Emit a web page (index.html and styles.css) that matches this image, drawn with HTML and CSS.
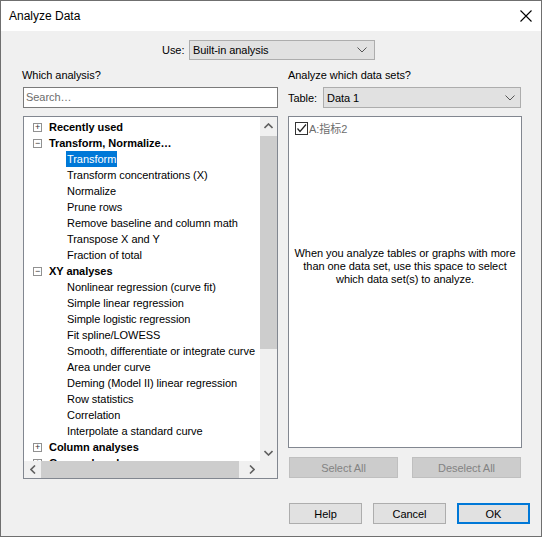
FILE: index.html
```html
<!DOCTYPE html>
<html>
<head>
<meta charset="utf-8">
<link rel="stylesheet" href="styles.css">
</head>
<body>
<div class="window">
  <div class="titlebar">
    <span class="title">Analyze Data</span>
    <svg class="close" width="12" height="12" viewBox="0 0 12 12"><path d="M0.5 0.5 L11.5 11.5 M11.5 0.5 L0.5 11.5" stroke="#000" stroke-width="1.1" fill="none"/></svg>
  </div>
  <div class="content">
    <div class="use-row">
      <span class="lbl">Use:</span>
      <div class="select use-select"><span>Built-in analysis</span><svg class="chev" width="10" height="6" viewBox="0 0 10 6"><path d="M0.5 0.5 L5 5 L9.5 0.5" stroke="#555" fill="none"/></svg></div>
    </div>
    <div class="columns">
      <div class="left">
        <div class="heading">Which analysis?</div>
        <div class="search">Search…</div>
        <div class="tree">
          <div class="tree-main">
            <div class="rows">
              <div class="row cat"><span class="exp">+</span>Recently used</div>
              <div class="row cat"><span class="exp">−</span>Transform, Normalize…</div>
              <div class="row item"><span class="sel">Transform</span></div>
              <div class="row item">Transform concentrations (X)</div>
              <div class="row item">Normalize</div>
              <div class="row item">Prune rows</div>
              <div class="row item">Remove baseline and column math</div>
              <div class="row item">Transpose X and Y</div>
              <div class="row item">Fraction of total</div>
              <div class="row cat"><span class="exp">−</span>XY analyses</div>
              <div class="row item">Nonlinear regression (curve fit)</div>
              <div class="row item">Simple linear regression</div>
              <div class="row item">Simple logistic regression</div>
              <div class="row item">Fit spline/LOWESS</div>
              <div class="row item">Smooth, differentiate or integrate curve</div>
              <div class="row item">Area under curve</div>
              <div class="row item">Deming (Model II) linear regression</div>
              <div class="row item">Row statistics</div>
              <div class="row item">Correlation</div>
              <div class="row item">Interpolate a standard curve</div>
              <div class="row cat"><span class="exp">+</span>Column analyses</div>
              <div class="row cat"><span class="exp">+</span>Grouped analyses</div>
            </div>
            <div class="vscroll">
              <div class="arrow"><svg width="9" height="6" viewBox="0 0 9 6"><path d="M0.5 5 L4.5 1 L8.5 5" stroke="#606060" stroke-width="1.6" fill="none"/></svg></div>
              <div class="vtrack"><div class="vthumb"></div></div>
              <div class="arrow"><svg width="9" height="6" viewBox="0 0 9 6"><path d="M0.5 1 L4.5 5 L8.5 1" stroke="#606060" stroke-width="1.6" fill="none"/></svg></div>
            </div>
          </div>
          <div class="hscroll">
            <div class="harrow"><svg width="6" height="9" viewBox="0 0 6 9"><path d="M5 0.5 L1 4.5 L5 8.5" stroke="#606060" stroke-width="1.6" fill="none"/></svg></div>
            <div class="htrack"><div class="hthumb"></div></div>
            <div class="harrow"><svg width="6" height="9" viewBox="0 0 6 9"><path d="M1 0.5 L5 4.5 L1 8.5" stroke="#606060" stroke-width="1.6" fill="none"/></svg></div>
            <div class="corner"></div>
          </div>
        </div>
      </div>
      <div class="right">
        <div class="heading">Analyze which data sets?</div>
        <div class="table-row">
          <span class="lbl">Table:</span>
          <div class="select table-select"><span>Data 1</span><svg class="chev" width="10" height="6" viewBox="0 0 10 6"><path d="M0.5 0.5 L5 5 L9.5 0.5" stroke="#555" fill="none"/></svg></div>
        </div>
        <div class="datasets">
          <div class="ds-item">
            <span class="cb"><svg width="11" height="11" viewBox="0 0 11 11"><path d="M1.5 5.5 L4 8.5 L10 1.5" stroke="#222" stroke-width="1.2" fill="none"/></svg></span>
            <span class="ds-text">A:指标2</span>
          </div>
          <div class="ds-note">When you analyze tables or graphs with more<br>than one data set, use this space to select<br>which data set(s) to analyze.</div>
        </div>
        <div class="sel-buttons">
          <div class="btn disabled">Select All</div>
          <div class="btn disabled">Deselect All</div>
        </div>
      </div>
    </div>
    <div class="footer">
      <div class="btn">Help</div>
      <div class="btn">Cancel</div>
      <div class="btn default">OK</div>
    </div>
  </div>
</div>
</body>
</html>
```
FILE: styles.css
```css
* { box-sizing: border-box; }
html, body { margin: 0; padding: 0; }
body {
  font-family: "Liberation Sans", Arial, "Noto Sans CJK SC", sans-serif;
  font-size: 11px;
  letter-spacing: -0.05px;
  color: #000;
  background: #f0f0f0;
}
.window {
  width: 542px;
  height: 537px;
  border: 1px solid #6f6f6f;
  display: flex;
  flex-direction: column;
  background: #f0f0f0;
}
.titlebar {
  height: 30px;
  background: #fff;
  display: flex;
  align-items: center;
  justify-content: space-between;
  padding: 0 9px 0 8px;
  flex: none;
}
.title { font-size: 12px; letter-spacing: 0; }
.content {
  flex: 1;
  display: flex;
  flex-direction: column;
  padding: 9px 0 0 21px;
}
.use-row {
  display: flex;
  align-items: center;
  height: 20px;
  margin-left: 140px;
}
.use-row .lbl { width: 27px; }
.select {
  background: #e1e1e1;
  border: 1px solid #adadad;
  display: flex;
  align-items: center;
  justify-content: space-between;
  padding: 0 7px 0 3px;
}
.use-select { width: 186px; height: 20px; }
.columns {
  display: flex;
  margin-top: 8px;
}
.left { width: 255px; margin-left: 1px; }
.right { width: 234px; margin-left: 10px; }
.heading { height: 16px; padding-top: 1px; }
.left .heading { margin-left: -1px; }
.search {
  margin-top: 3px;
  height: 21px;
  border: 1px solid #7a7a7a;
  background: #fff;
  color: #6d6d6d;
  padding: 3px 0 0 2px;
}
.tree {
  margin-top: 8px;
  height: 363px;
  border: 1px solid #828790;
  background: #fff;
  display: flex;
  flex-direction: column;
}
.tree-main {
  flex: 1;
  display: flex;
  overflow: hidden;
}
.rows {
  flex: 1;
  overflow: hidden;
  padding-top: 2px;
  white-space: nowrap;
}
.row {
  height: 16px;
  line-height: 16px;
  display: flex;
  align-items: center;
}
.row.cat { font-weight: bold; padding-left: 9px; }
.row.item { padding-left: 43px; }
.exp {
  width: 9px;
  height: 9px;
  border: 1px solid #919191;
  font-size: 9px;
  line-height: 7px;
  text-align: center;
  font-weight: normal;
  color: #333;
  margin-right: 7px;
  flex: none;
}
.sel {
  background: #0078d7;
  color: #fff;
  padding: 0 1px;
  margin-left: -1px;
  line-height: 16px;
}
.vscroll {
  width: 17px;
  background: #f0f0f0;
  display: flex;
  flex-direction: column;
  flex: none;
}
.arrow {
  height: 17px;
  display: flex;
  align-items: center;
  justify-content: center;
  flex: none;
}
.vtrack { flex: 1; padding-top: 2px; }
.vthumb { width: 17px; height: 213px; background: #cdcdcd; }
.hscroll {
  height: 17px;
  display: flex;
  background: #f0f0f0;
  flex: none;
}
.harrow {
  width: 17px;
  display: flex;
  align-items: center;
  justify-content: center;
  flex: none;
}
.htrack { flex: 1; }
.hthumb { width: 198px; height: 17px; background: #cdcdcd; }
.corner { width: 17px; background: #f0f0f0; }
.table-row {
  display: flex;
  align-items: center;
  margin-top: 3px;
  height: 21px;
}
.table-row .lbl { width: 35px; }
.table-select { width: 198px; height: 21px; padding-right: 5px; }
.datasets {
  margin-top: 8px;
  height: 332px;
  border: 1px solid #828790;
  background: #fff;
  position: relative;
  display: flex;
  flex-direction: column;
  justify-content: center;
}
.ds-item {
  position: absolute;
  left: 6px;
  top: 3px;
  display: flex;
  align-items: center;
}
.cb {
  width: 13px;
  height: 13px;
  border: 1px solid #333;
  display: flex;
  align-items: center;
  justify-content: center;
  background: #fff;
}
.ds-text { color: #6d6d6d; margin-left: 1px; }
.ds-note {
  text-align: center;
  line-height: 13px;
  padding: 0 2px;
  margin-bottom: 32px;
}
.sel-buttons {
  display: flex;
  justify-content: space-between;
  margin-top: 9px;
  padding: 0 1px;
}
.btn {
  height: 21px;
  background: #e1e1e1;
  border: 1px solid #adadad;
  display: flex;
  align-items: center;
  justify-content: center;
}
.sel-buttons .btn { width: 109px; }
.btn.disabled { background: #cccccc; border-color: #bfbfbf; color: #838383; }
.footer {
  display: flex;
  justify-content: flex-end;
  margin-top: 24px;
  padding-right: 11px;
  gap: 11px;
}
.footer .btn { width: 73px; }
.btn.default { border: 2px solid #0078d7; }
```
